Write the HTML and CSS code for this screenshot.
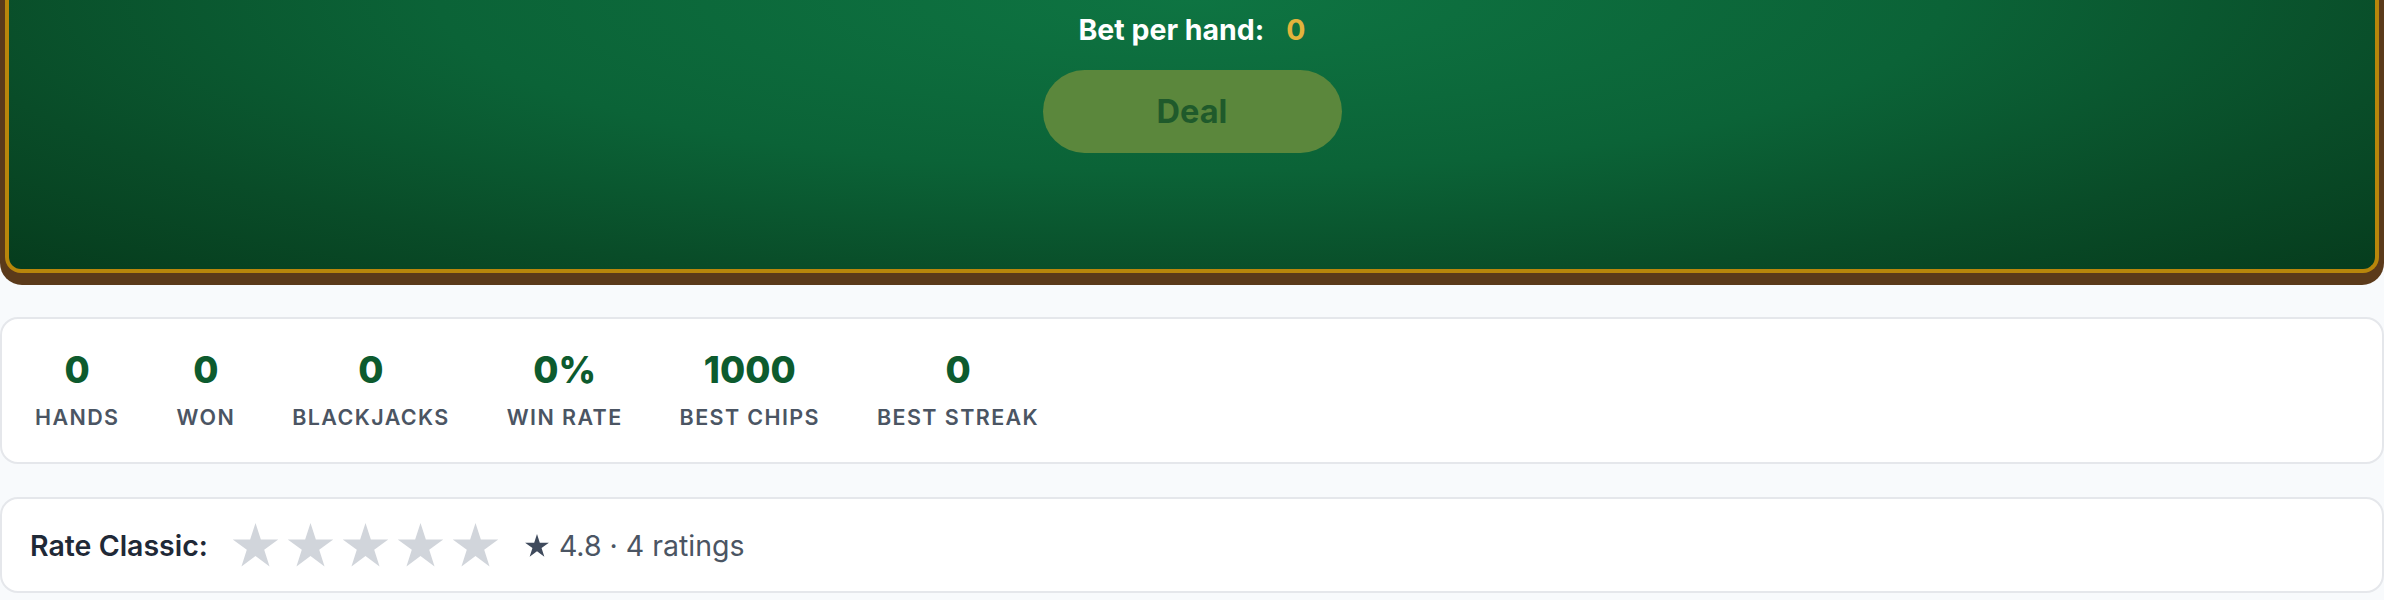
FILE: index.html
```html
<!DOCTYPE html>
<html lang="en">
<head>
    <meta charset="UTF-8">
    <meta name="viewport" content="width=device-width, initial-scale=1.0">
    <title>Blackjack Classic</title>
    <link rel="stylesheet" href="styles.css">
</head>
<body>
    <div class="table-rim">
        <div class="felt">
            <div class="bet-row">
                <span class="bet-label">Bet per hand:</span>
                <span class="bet-value">0</span>
            </div>
            <button class="deal-btn" disabled>Deal</button>
        </div>
    </div>

    <div class="card stats">
        <div class="stat">
            <span class="stat-num">0</span>
            <span class="stat-label">Hands</span>
        </div>
        <div class="stat">
            <span class="stat-num">0</span>
            <span class="stat-label">Won</span>
        </div>
        <div class="stat">
            <span class="stat-num">0</span>
            <span class="stat-label">Blackjacks</span>
        </div>
        <div class="stat">
            <span class="stat-num">0%</span>
            <span class="stat-label">Win Rate</span>
        </div>
        <div class="stat">
            <span class="stat-num">1000</span>
            <span class="stat-label">Best Chips</span>
        </div>
        <div class="stat">
            <span class="stat-num">0</span>
            <span class="stat-label">Best Streak</span>
        </div>
    </div>

    <div class="card rating">
        <span class="rate-label">Rate Classic:</span>
        <div class="stars">
            <svg class="star" viewBox="0 0 48 46"><polygon points="24,0 29.6,17.3 47.8,17.3 33.1,28 38.7,45.4 24,34.6 9.3,45.4 14.9,28 0.2,17.3 18.4,17.3"/></svg>
            <svg class="star" viewBox="0 0 48 46"><polygon points="24,0 29.6,17.3 47.8,17.3 33.1,28 38.7,45.4 24,34.6 9.3,45.4 14.9,28 0.2,17.3 18.4,17.3"/></svg>
            <svg class="star" viewBox="0 0 48 46"><polygon points="24,0 29.6,17.3 47.8,17.3 33.1,28 38.7,45.4 24,34.6 9.3,45.4 14.9,28 0.2,17.3 18.4,17.3"/></svg>
            <svg class="star" viewBox="0 0 48 46"><polygon points="24,0 29.6,17.3 47.8,17.3 33.1,28 38.7,45.4 24,34.6 9.3,45.4 14.9,28 0.2,17.3 18.4,17.3"/></svg>
            <svg class="star" viewBox="0 0 48 46"><polygon points="24,0 29.6,17.3 47.8,17.3 33.1,28 38.7,45.4 24,34.6 9.3,45.4 14.9,28 0.2,17.3 18.4,17.3"/></svg>
        </div>
        <span class="avg">
            <svg class="avg-star" viewBox="0 0 48 46"><polygon points="24,0 29.6,17.3 47.8,17.3 33.1,28 38.7,45.4 24,34.6 9.3,45.4 14.9,28 0.2,17.3 18.4,17.3"/></svg>
            4.8 · 4 ratings
        </span>
    </div>
</body>
</html>
```

FILE: styles.css
```css
/* Base */
* {
    margin: 0;
    padding: 0;
    box-sizing: border-box;
}

body {
    font-family: Inter, "Noto Sans", Arial, sans-serif;
    background-color: #f8fafc;
    width: 2384px;
}

/* Table */
.table-rim {
    background-color: #5b3a1a;
    padding: 0 5px 12px;
    border-radius: 0 0 22px 22px;
}

.felt {
    background: radial-gradient(ellipse farthest-corner at 50% 0%, #0e7442 0%, #0b6337 45%, #094c28 75%, #063c1d 100%);
    border: 4px solid #b8860b;
    border-top: none;
    border-radius: 0 0 16px 16px;
    padding: 12px 0 116px;
    display: flex;
    flex-direction: column;
    align-items: center;
}

.bet-row {
    display: flex;
    align-items: center;
    gap: 22px;
    height: 36px;
    font-size: 28.5px;
    font-weight: 700;
    line-height: 36px;
}

.bet-label {
    color: #ffffff;
}

.bet-value {
    color: #e2b33c;
}

.deal-btn {
    margin-top: 22px;
    width: 299px;
    height: 83px;
    border: none;
    border-radius: 999px;
    background-color: #5b873c;
    color: #1f5a2b;
    font-family: inherit;
    font-size: 32.5px;
    font-weight: 700;
}

/* Cards */
.card {
    background-color: #ffffff;
    border: 2px solid #e5e7eb;
    border-radius: 18px;
}

.stats {
    margin-top: 32px;
    display: flex;
    gap: 57px;
    padding: 29px 33px 31px;
}

.stat {
    display: flex;
    flex-direction: column;
    align-items: center;
}

.stat-num {
    font-size: 36.5px;
    font-weight: 800;
    line-height: 44px;
    color: #0d5b2e;
}

.stat-label {
    margin-top: 11px;
    font-size: 21.5px;
    font-weight: 600;
    line-height: 28px;
    letter-spacing: 0.065em;
    text-transform: uppercase;
    color: #4b5563;
}

.rating {
    margin-top: 33px;
    display: flex;
    align-items: center;
    padding: 24px 28px;
}

.rate-label {
    font-size: 28.5px;
    font-weight: 600;
    color: #1f2937;
}

.stars {
    display: flex;
    gap: 8px;
    margin-left: 24px;
}

.star {
    width: 47px;
    height: 44px;
    fill: #d1d5db;
}

.avg {
    display: flex;
    align-items: center;
    gap: 10px;
    margin-left: 26px;
    font-size: 28.5px;
    color: #4b5563;
}

.avg-star {
    width: 24px;
    height: 23px;
    fill: #3f4a5c;
}
```
